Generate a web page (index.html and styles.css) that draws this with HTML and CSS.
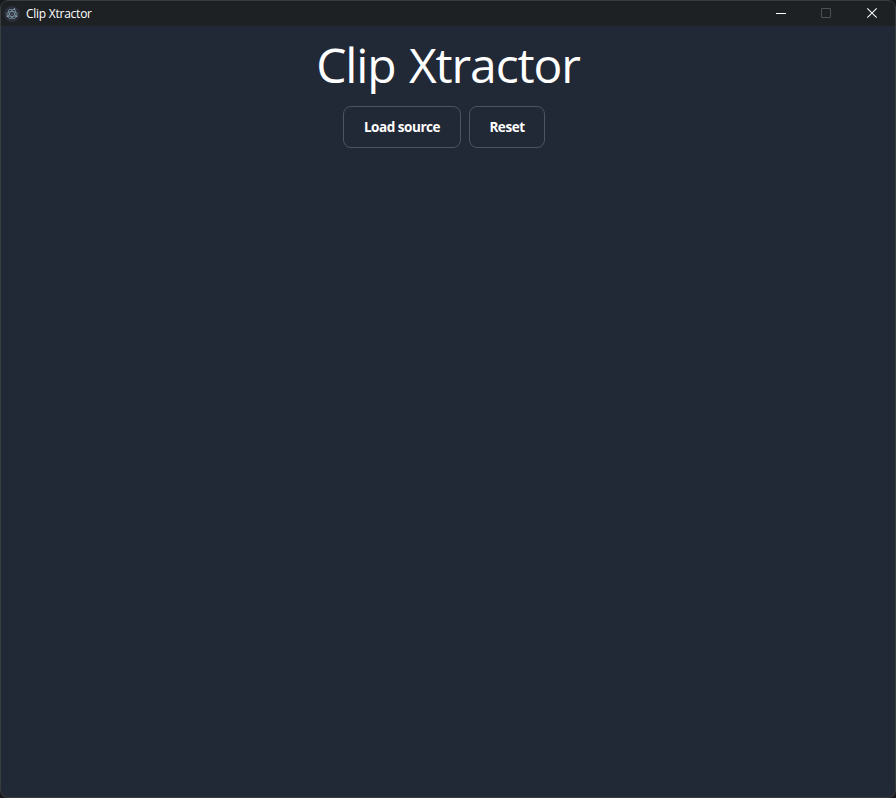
FILE: index.html
```html
<!DOCTYPE html>
<html lang="en">
<head>
<meta charset="utf-8">
<title>Clip Xtractor</title>
<link rel="stylesheet" href="styles.css">
</head>
<body>
<div class="window">
  <header class="titlebar">
    <svg class="app-icon" width="16" height="16" viewBox="0 0 16 16">
      <circle cx="8" cy="8" r="8" fill="#2b2e3b"/>
      <g fill="none" stroke="#86a3af" stroke-width=".7">
        <ellipse cx="8" cy="8" rx="5.2" ry="2.4"/>
        <ellipse cx="8" cy="8" rx="5.2" ry="2.4" transform="rotate(60 8 8)"/>
        <ellipse cx="8" cy="8" rx="5.2" ry="2.4" transform="rotate(120 8 8)"/>
      </g>
      <circle cx="8" cy="8" r="1.5" fill="#2b2e3b"/>
      <g fill="#a0bac4">
        <circle cx="8" cy="8" r=".6"/>
        <circle cx="10.5" cy="2.9" r=".75"/>
        <circle cx="3.4" cy="10.3" r=".75"/>
        <circle cx="12.6" cy="10.3" r=".75"/>
      </g>
    </svg>
    <span class="caption">Clip Xtractor</span>
    <div class="controls">
      <svg width="46" height="25" viewBox="0 0 46 25"><path d="M13 12.5h10" stroke="#fff"/></svg>
      <svg width="46" height="25" viewBox="0 0 46 25"><rect x="12.5" y="7.5" width="9" height="9" rx=".5" fill="none" stroke="#4f5254"/></svg>
      <svg width="46" height="25" viewBox="0 0 46 25"><path d="M12.3 7.3l9.4 9.4m0-9.4l-9.4 9.4" stroke="#f4f4f4" stroke-width="1.15"/></svg>
    </div>
  </header>
  <main class="content">
    <h1 class="title">Clip Xtractor</h1>
    <div class="actions">
      <button class="btn load">Load source</button>
      <button class="btn reset">Reset</button>
    </div>
  </main>
</div>
</body>
</html>
```
FILE: styles.css
```css
* { box-sizing: border-box; }
html, body { margin: 0; height: 100%; background: #17191c; overflow: hidden; }
body { font-family: "Open Sans", "Noto Sans", sans-serif; color: #fff; }
.window {
  height: 798px;
  border: 1px solid #3a3d40;
  border-radius: 8px;
  background: #222936;
  overflow: hidden;
}
.titlebar {
  display: flex;
  align-items: center;
  height: 25px;
  padding-left: 3px;
  background: #1e2124;
}
.app-icon { flex: none; }
.caption { margin-left: 6px; flex: 1; font-size: 12px; line-height: 24px; letter-spacing: -0.25px; }
.controls { display: flex; margin-right: -6px; }
.controls svg { display: block; }
.content { display: flex; flex-direction: column; align-items: center; padding-top: 15px; }
.title { margin: 0; font-size: 48px; line-height: 48px; font-weight: 400; letter-spacing: -1.1px; word-spacing: 2px; white-space: nowrap; }
.actions { display: flex; gap: 8px; margin: 17px 8px 0 0; }
.btn {
  height: 42px;
  padding: 0;
  border: 1px solid #4b5563;
  border-radius: 8px;
  background: #222936;
  color: #fff;
  font: 700 13.5px/20px "Open Sans", "Noto Sans", sans-serif;
  letter-spacing: -0.45px;
}
.load { width: 118px; }
.reset { width: 76px; }
```
